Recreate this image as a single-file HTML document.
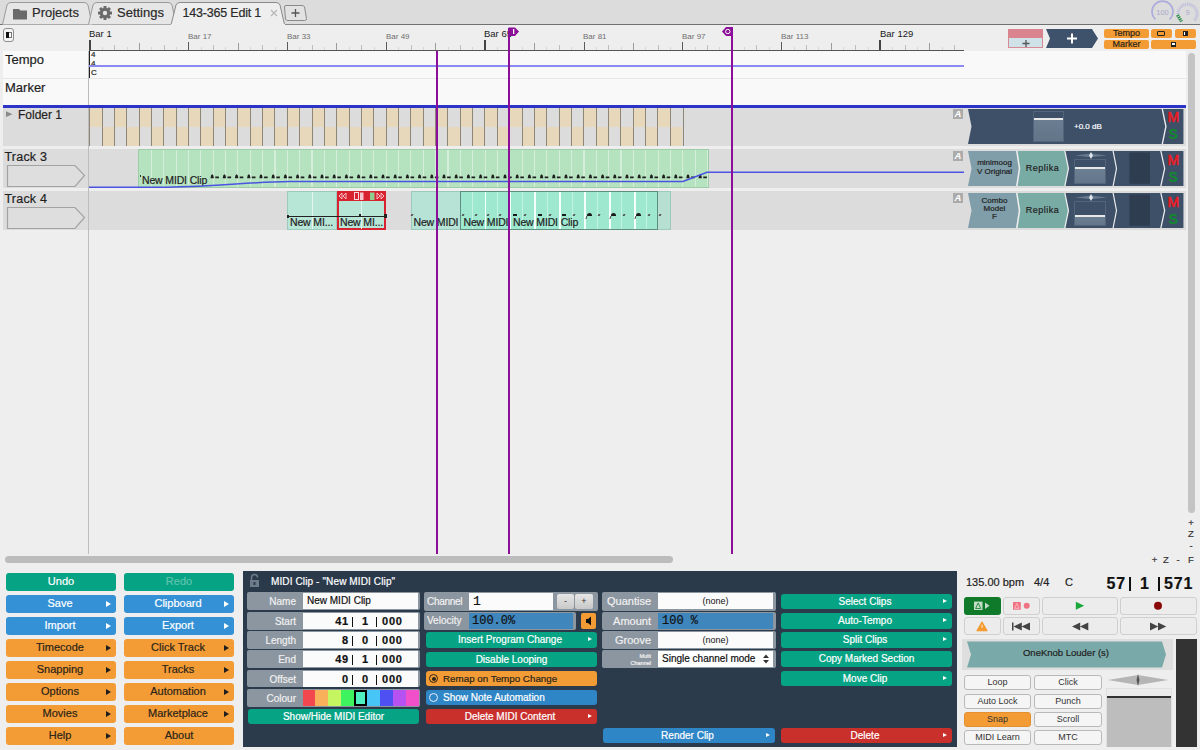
<!DOCTYPE html><html><head><meta charset="utf-8"><style>
*{box-sizing:border-box;margin:0;padding:0}
html,body{width:1200px;height:750px;overflow:hidden;background:#eeeeee;font-family:"Liberation Sans",sans-serif;position:relative}
div,span,i{position:absolute;display:block}
span,.btn,.val{-webkit-text-stroke:0.2px currentColor}
.thin{-webkit-text-stroke:0}
.btn{border-radius:3px;text-align:center;font-size:11px;line-height:18px;color:#fff;white-space:nowrap}
.g{background:#07a385}
.b{background:#3591d5}
.o{background:#f39c36;color:#2b2418}
.r{background:#c9302c}
.arr{right:5px;top:5.5px;width:0;height:0;border-left:5px solid #fff;border-top:3.2px solid transparent;border-bottom:3.2px solid transparent}
.o .arr{border-left-color:#1e1e1e}
.tk{width:1px;background:#c4c4c4}
.lbl{font-size:11px;color:#f0f0f0;text-align:right;white-space:nowrap}
.row{background:#8c96a0;border-radius:2px}
.val{background:#fbfbfb;color:#111;font-size:11px;white-space:nowrap}
.tb{border:1px solid #cfcfcf;border-radius:3px;background:#ececec}
.sb{border:1px solid #b9b9b9;border-radius:3px;background:#f5f5f5;font-size:10px;text-align:center;color:#333;line-height:13px}
</style></head><body>
<div style="left:0;top:0;width:1200px;height:25px;background:#dcdcdc"></div>
<div style="left:0;top:24px;width:1200px;height:1px;background:#707070"></div>
<svg style="position:absolute;left:0;top:0" width="320" height="26">
<path d="M2.5 24.5 L7 5 Q8 2.5 11 2.5 L84 2.5 Q87 2.5 88 5 L92 24.5" fill="#e6e6e6" stroke="#9a9a9a" stroke-width="1"/>
<path d="M88.5 24.5 L93 5 Q94 2.5 97 2.5 L168 2.5 Q171 2.5 172 5 L176 24.5" fill="#e6e6e6" stroke="#9a9a9a" stroke-width="1"/>
<path d="M171 25 L176 5 Q177 2.5 180 2.5 L276 2.5 Q279 2.5 280 5 L284.5 24.5 L1200 24.5" fill="#eeeeee" stroke="#8a8a8a" stroke-width="1"/>
<rect x="171" y="24" width="114" height="3" fill="#eeeeee"/>
<path d="M284.5 7 Q284.5 5.5 286 5.5 L302 5.5 Q304 5.5 304.5 7 L306.5 18.5 Q306.5 20.5 304.5 20.5 L288 20.5 Q286 20.5 285.5 19 Z" fill="#e2e2e2" stroke="#8a8a8a"/>
<path d="M295.5 9 V17 M291.5 13 H299.5" stroke="#555" stroke-width="1.3"/>
<path d="M13 9 H19 L20.5 10.5 H27 V19.5 H13 Z" fill="#6a6a6a"/>
<g transform="translate(105,13)" fill="#6a6a6a"><circle r="5.2"/><g id="teeth"><rect x="-1.5" y="-7" width="3" height="14"/><rect x="-7" y="-1.5" width="14" height="3"/><rect x="-1.5" y="-7" width="3" height="14" transform="rotate(45)"/><rect x="-1.5" y="-7" width="3" height="14" transform="rotate(-45)"/></g><circle r="2.2" fill="#e6e6e6"/></g>
<path d="M271 10 L277 16 M277 10 L271 16" stroke="#b5b5b5" stroke-width="1.2"/>
</svg>
<span style="left:32px;top:5px;font-size:13px;color:#2a2a2a;line-height:16px">Projects</span>
<span style="left:117px;top:5px;font-size:13px;color:#2a2a2a;line-height:16px">Settings</span>
<span style="left:182.5px;top:5px;font-size:12.5px;color:#2a2a2a;line-height:16px;letter-spacing:-0.2px">143-365 Edit 1</span>
<svg style="position:absolute;left:1145px;top:0" width="55" height="25">
<path d="M10.5 19.5 A10.5 10.5 0 1 1 24.5 19.5" fill="none" stroke="#acacdc" stroke-width="1.6"/>
<text x="17.5" y="15" font-size="7.5" fill="#a8a8cc" text-anchor="middle" font-family="Liberation Sans">100</text>
<path d="M35.8 20.5 A9.5 9.5 0 1 1 49.2 20.5" fill="none" stroke="#b8b8de" stroke-width="3" stroke-dasharray="0.9 0.9"/>
<path d="M32.5 15 L36.5 21.5" stroke="#1f8f3a" stroke-width="3.2" stroke-dasharray="1.3 0.9"/>
<text x="42.5" y="15" font-size="7.5" fill="#a8a8cc" text-anchor="middle" font-family="Liberation Sans">9</text>
</svg>
<div style="left:0;top:25px;width:1200px;height:26px;background:#eeeeee"></div>
<div style="left:3px;top:28px;width:11px;height:14px;border:1px solid #8e8e8e;border-radius:3px;background:#f3f3f3"></div>
<div style="left:6px;top:32px;width:6px;height:6px;border:1px solid #777;background:#fff"></div>
<div style="left:6px;top:32px;width:3px;height:6px;background:#111"></div>
<i class="tk" style="left:88.5px;top:40px;height:10px;width:2px;background:#444"></i><i class="tk" style="left:101.5px;top:47px;height:3px;width:1.2px;background:#d6d6d6"></i><i class="tk" style="left:114.0px;top:45px;height:5px;width:1.2px;background:#bdbdbd"></i><i class="tk" style="left:126.5px;top:47px;height:3px;width:1.2px;background:#d6d6d6"></i><i class="tk" style="left:138.5px;top:43px;height:7px;width:1.3px;background:#9c9c9c"></i><i class="tk" style="left:151.0px;top:47px;height:3px;width:1.2px;background:#d6d6d6"></i><i class="tk" style="left:163.5px;top:45px;height:5px;width:1.2px;background:#bdbdbd"></i><i class="tk" style="left:175.5px;top:47px;height:3px;width:1.2px;background:#d6d6d6"></i><i class="tk" style="left:188.0px;top:41.5px;height:8.5px;width:1.3px;background:#5a5a5a"></i><i class="tk" style="left:200.5px;top:47px;height:3px;width:1.2px;background:#d6d6d6"></i><i class="tk" style="left:212.5px;top:45px;height:5px;width:1.2px;background:#bdbdbd"></i><i class="tk" style="left:225.0px;top:47px;height:3px;width:1.2px;background:#d6d6d6"></i><i class="tk" style="left:237.5px;top:43px;height:7px;width:1.3px;background:#9c9c9c"></i><i class="tk" style="left:250.0px;top:47px;height:3px;width:1.2px;background:#d6d6d6"></i><i class="tk" style="left:262.0px;top:45px;height:5px;width:1.2px;background:#bdbdbd"></i><i class="tk" style="left:274.5px;top:47px;height:3px;width:1.2px;background:#d6d6d6"></i><i class="tk" style="left:287.0px;top:41.5px;height:8.5px;width:1.3px;background:#5a5a5a"></i><i class="tk" style="left:299.0px;top:47px;height:3px;width:1.2px;background:#d6d6d6"></i><i class="tk" style="left:311.5px;top:45px;height:5px;width:1.2px;background:#bdbdbd"></i><i class="tk" style="left:324.0px;top:47px;height:3px;width:1.2px;background:#d6d6d6"></i><i class="tk" style="left:336.0px;top:43px;height:7px;width:1.3px;background:#9c9c9c"></i><i class="tk" style="left:348.5px;top:47px;height:3px;width:1.2px;background:#d6d6d6"></i><i class="tk" style="left:361.0px;top:45px;height:5px;width:1.2px;background:#bdbdbd"></i><i class="tk" style="left:373.5px;top:47px;height:3px;width:1.2px;background:#d6d6d6"></i><i class="tk" style="left:385.5px;top:41.5px;height:8.5px;width:1.3px;background:#5a5a5a"></i><i class="tk" style="left:398.0px;top:47px;height:3px;width:1.2px;background:#d6d6d6"></i><i class="tk" style="left:410.5px;top:45px;height:5px;width:1.2px;background:#bdbdbd"></i><i class="tk" style="left:422.5px;top:47px;height:3px;width:1.2px;background:#d6d6d6"></i><i class="tk" style="left:435.0px;top:43px;height:7px;width:1.3px;background:#9c9c9c"></i><i class="tk" style="left:447.5px;top:47px;height:3px;width:1.2px;background:#d6d6d6"></i><i class="tk" style="left:460.0px;top:45px;height:5px;width:1.2px;background:#bdbdbd"></i><i class="tk" style="left:472.0px;top:47px;height:3px;width:1.2px;background:#d6d6d6"></i><i class="tk" style="left:484.0px;top:40px;height:10px;width:2px;background:#444"></i><i class="tk" style="left:497.0px;top:47px;height:3px;width:1.2px;background:#d6d6d6"></i><i class="tk" style="left:509.0px;top:45px;height:5px;width:1.2px;background:#bdbdbd"></i><i class="tk" style="left:521.5px;top:47px;height:3px;width:1.2px;background:#d6d6d6"></i><i class="tk" style="left:534.0px;top:43px;height:7px;width:1.3px;background:#9c9c9c"></i><i class="tk" style="left:546.0px;top:47px;height:3px;width:1.2px;background:#d6d6d6"></i><i class="tk" style="left:558.5px;top:45px;height:5px;width:1.2px;background:#bdbdbd"></i><i class="tk" style="left:571.0px;top:47px;height:3px;width:1.2px;background:#d6d6d6"></i><i class="tk" style="left:583.5px;top:41.5px;height:8.5px;width:1.3px;background:#5a5a5a"></i><i class="tk" style="left:595.5px;top:47px;height:3px;width:1.2px;background:#d6d6d6"></i><i class="tk" style="left:608.0px;top:45px;height:5px;width:1.2px;background:#bdbdbd"></i><i class="tk" style="left:620.5px;top:47px;height:3px;width:1.2px;background:#d6d6d6"></i><i class="tk" style="left:632.5px;top:43px;height:7px;width:1.3px;background:#9c9c9c"></i><i class="tk" style="left:645.0px;top:47px;height:3px;width:1.2px;background:#d6d6d6"></i><i class="tk" style="left:657.5px;top:45px;height:5px;width:1.2px;background:#bdbdbd"></i><i class="tk" style="left:669.5px;top:47px;height:3px;width:1.2px;background:#d6d6d6"></i><i class="tk" style="left:682.0px;top:41.5px;height:8.5px;width:1.3px;background:#5a5a5a"></i><i class="tk" style="left:694.5px;top:47px;height:3px;width:1.2px;background:#d6d6d6"></i><i class="tk" style="left:707.0px;top:45px;height:5px;width:1.2px;background:#bdbdbd"></i><i class="tk" style="left:719.0px;top:47px;height:3px;width:1.2px;background:#d6d6d6"></i><i class="tk" style="left:731.5px;top:43px;height:7px;width:1.3px;background:#9c9c9c"></i><i class="tk" style="left:744.0px;top:47px;height:3px;width:1.2px;background:#d6d6d6"></i><i class="tk" style="left:756.0px;top:45px;height:5px;width:1.2px;background:#bdbdbd"></i><i class="tk" style="left:768.5px;top:47px;height:3px;width:1.2px;background:#d6d6d6"></i><i class="tk" style="left:781.0px;top:41.5px;height:8.5px;width:1.3px;background:#5a5a5a"></i><i class="tk" style="left:793.5px;top:47px;height:3px;width:1.2px;background:#d6d6d6"></i><i class="tk" style="left:805.5px;top:45px;height:5px;width:1.2px;background:#bdbdbd"></i><i class="tk" style="left:818.0px;top:47px;height:3px;width:1.2px;background:#d6d6d6"></i><i class="tk" style="left:830.5px;top:43px;height:7px;width:1.3px;background:#9c9c9c"></i><i class="tk" style="left:842.5px;top:47px;height:3px;width:1.2px;background:#d6d6d6"></i><i class="tk" style="left:855.0px;top:45px;height:5px;width:1.2px;background:#bdbdbd"></i><i class="tk" style="left:867.5px;top:47px;height:3px;width:1.2px;background:#d6d6d6"></i><i class="tk" style="left:879.0px;top:40px;height:10px;width:2px;background:#444"></i><i class="tk" style="left:892.0px;top:47px;height:3px;width:1.2px;background:#d6d6d6"></i><i class="tk" style="left:904.5px;top:45px;height:5px;width:1.2px;background:#bdbdbd"></i><i class="tk" style="left:917.0px;top:47px;height:3px;width:1.2px;background:#d6d6d6"></i><i class="tk" style="left:929.0px;top:43px;height:7px;width:1.3px;background:#9c9c9c"></i><i class="tk" style="left:941.5px;top:47px;height:3px;width:1.2px;background:#d6d6d6"></i><i class="tk" style="left:954.0px;top:45px;height:5px;width:1.2px;background:#bdbdbd"></i>
<div style="left:89px;top:50px;width:875px;height:1px;background:#555"></div>
<span class="thin" style="left:188px;top:31.5px;font-size:8px;color:#6e6e6e;line-height:9px">Bar 17</span>
<span class="thin" style="left:287px;top:31.5px;font-size:8px;color:#6e6e6e;line-height:9px">Bar 33</span>
<span class="thin" style="left:386px;top:31.5px;font-size:8px;color:#6e6e6e;line-height:9px">Bar 49</span>
<span class="thin" style="left:583px;top:31.5px;font-size:8px;color:#6e6e6e;line-height:9px">Bar 81</span>
<span class="thin" style="left:682px;top:31.5px;font-size:8px;color:#6e6e6e;line-height:9px">Bar 97</span>
<span class="thin" style="left:781px;top:31.5px;font-size:8px;color:#6e6e6e;line-height:9px">Bar 113</span>
<span class="thin" style="left:89px;top:29px;font-size:9.5px;color:#1a1a1a;line-height:10px">Bar 1</span>
<span class="thin" style="left:484px;top:29px;font-size:9.5px;color:#1a1a1a;line-height:10px">Bar 65</span>
<span class="thin" style="left:880px;top:29px;font-size:9.5px;color:#1a1a1a;line-height:10px">Bar 129</span>
<div style="left:3px;top:51px;width:1183px;height:27px;background:#f9f9f9"></div>
<div style="left:3px;top:78px;width:1183px;height:1px;background:#e6e6e6"></div>
<div style="left:3px;top:79px;width:1183px;height:26px;background:#f9f9f9"></div>
<span style="left:5px;top:52px;font-size:13px;color:#1f1f1f;line-height:15px">Tempo</span>
<span style="left:5px;top:80px;font-size:13px;color:#1f1f1f;line-height:15px">Marker</span>
<div style="left:89px;top:51px;width:1px;height:27px;background:#222"></div>
<span style="left:91px;top:50px;font-size:8px;color:#222;line-height:9px">4<br>4<br>C</span>
<div style="left:89px;top:65px;width:875px;height:2px;background:#8a8af2"></div>
<div style="left:3px;top:107px;width:1183px;height:39px;background:#dcdcdc"></div>
<div style="left:3px;top:149px;width:1183px;height:39px;background:#dcdcdc"></div>
<div style="left:3px;top:191px;width:1183px;height:39px;background:#dcdcdc"></div>
<div style="left:88px;top:51px;width:1px;height:503px;background:#bdbdbd"></div>
<svg style="position:absolute;left:5px;top:110px" width="10" height="10"><path d="M1 1.3 L7.5 4.2 L1 7 Z" fill="#8a8a8a"/></svg>
<span style="left:18px;top:108px;font-size:12px;color:#1f1f1f;line-height:14px">Folder 1</span>
<span style="left:4.5px;top:150px;font-size:12.5px;color:#1f1f1f;line-height:14px;letter-spacing:0.2px">Track 3</span>
<span style="left:4.5px;top:191.7px;font-size:12.5px;color:#1f1f1f;line-height:14px;letter-spacing:0.2px">Track 4</span>
<svg style="position:absolute;left:6px;top:164px" width="80" height="25"><path d="M1.5 1.5 H69 L78.5 11.5 L69 22.5 H1.5 Z" fill="#dedede" stroke="#a3a3a3" stroke-width="1.2"/></svg>
<svg style="position:absolute;left:6px;top:206px" width="80" height="25"><path d="M1.5 1.5 H69 L78.5 11.5 L69 22.5 H1.5 Z" fill="#dedede" stroke="#a3a3a3" stroke-width="1.2"/></svg>
<i style="left:89.20px;top:107px;width:12.35px;height:20px;background:#e8d8bb"></i><i style="left:89.20px;top:127px;width:12.35px;height:19px;background:#dcdcdc"></i><i style="left:89.20px;top:107px;width:1px;height:39px;background:#8e8677"></i><i style="left:101.55px;top:107px;width:12.35px;height:20px;background:#dcdcdc"></i><i style="left:101.55px;top:127px;width:12.35px;height:19px;background:#e8d8bb"></i><i style="left:101.55px;top:107px;width:1px;height:39px;background:#8e8677"></i><i style="left:113.90px;top:107px;width:12.35px;height:20px;background:#e8d8bb"></i><i style="left:113.90px;top:127px;width:12.35px;height:19px;background:#dcdcdc"></i><i style="left:113.90px;top:107px;width:1px;height:39px;background:#8e8677"></i><i style="left:126.26px;top:107px;width:12.35px;height:20px;background:#dcdcdc"></i><i style="left:126.26px;top:127px;width:12.35px;height:19px;background:#e8d8bb"></i><i style="left:126.26px;top:107px;width:1px;height:39px;background:#8e8677"></i><i style="left:138.61px;top:107px;width:12.35px;height:20px;background:#e8d8bb"></i><i style="left:138.61px;top:127px;width:12.35px;height:19px;background:#dcdcdc"></i><i style="left:138.61px;top:107px;width:1px;height:39px;background:#8e8677"></i><i style="left:150.96px;top:107px;width:12.35px;height:20px;background:#dcdcdc"></i><i style="left:150.96px;top:127px;width:12.35px;height:19px;background:#e8d8bb"></i><i style="left:150.96px;top:107px;width:1px;height:39px;background:#8e8677"></i><i style="left:163.31px;top:107px;width:12.35px;height:20px;background:#e8d8bb"></i><i style="left:163.31px;top:127px;width:12.35px;height:19px;background:#dcdcdc"></i><i style="left:163.31px;top:107px;width:1px;height:39px;background:#8e8677"></i><i style="left:175.66px;top:107px;width:12.35px;height:20px;background:#dcdcdc"></i><i style="left:175.66px;top:127px;width:12.35px;height:19px;background:#e8d8bb"></i><i style="left:175.66px;top:107px;width:1px;height:39px;background:#8e8677"></i><i style="left:188.02px;top:107px;width:12.35px;height:20px;background:#e8d8bb"></i><i style="left:188.02px;top:127px;width:12.35px;height:19px;background:#dcdcdc"></i><i style="left:188.02px;top:107px;width:1px;height:39px;background:#8e8677"></i><i style="left:200.37px;top:107px;width:12.35px;height:20px;background:#dcdcdc"></i><i style="left:200.37px;top:127px;width:12.35px;height:19px;background:#e8d8bb"></i><i style="left:200.37px;top:107px;width:1px;height:39px;background:#8e8677"></i><i style="left:212.72px;top:107px;width:12.35px;height:20px;background:#e8d8bb"></i><i style="left:212.72px;top:127px;width:12.35px;height:19px;background:#dcdcdc"></i><i style="left:212.72px;top:107px;width:1px;height:39px;background:#8e8677"></i><i style="left:225.07px;top:107px;width:12.35px;height:20px;background:#dcdcdc"></i><i style="left:225.07px;top:127px;width:12.35px;height:19px;background:#e8d8bb"></i><i style="left:225.07px;top:107px;width:1px;height:39px;background:#8e8677"></i><i style="left:237.42px;top:107px;width:12.35px;height:20px;background:#e8d8bb"></i><i style="left:237.42px;top:127px;width:12.35px;height:19px;background:#dcdcdc"></i><i style="left:237.42px;top:107px;width:1px;height:39px;background:#8e8677"></i><i style="left:249.78px;top:107px;width:12.35px;height:20px;background:#dcdcdc"></i><i style="left:249.78px;top:127px;width:12.35px;height:19px;background:#e8d8bb"></i><i style="left:249.78px;top:107px;width:1px;height:39px;background:#8e8677"></i><i style="left:262.13px;top:107px;width:12.35px;height:20px;background:#e8d8bb"></i><i style="left:262.13px;top:127px;width:12.35px;height:19px;background:#dcdcdc"></i><i style="left:262.13px;top:107px;width:1px;height:39px;background:#8e8677"></i><i style="left:274.48px;top:107px;width:12.35px;height:20px;background:#dcdcdc"></i><i style="left:274.48px;top:127px;width:12.35px;height:19px;background:#e8d8bb"></i><i style="left:274.48px;top:107px;width:1px;height:39px;background:#8e8677"></i><i style="left:286.83px;top:107px;width:12.35px;height:20px;background:#e8d8bb"></i><i style="left:286.83px;top:127px;width:12.35px;height:19px;background:#dcdcdc"></i><i style="left:286.83px;top:107px;width:1px;height:39px;background:#8e8677"></i><i style="left:299.18px;top:107px;width:12.35px;height:20px;background:#dcdcdc"></i><i style="left:299.18px;top:127px;width:12.35px;height:19px;background:#e8d8bb"></i><i style="left:299.18px;top:107px;width:1px;height:39px;background:#8e8677"></i><i style="left:311.54px;top:107px;width:12.35px;height:20px;background:#e8d8bb"></i><i style="left:311.54px;top:127px;width:12.35px;height:19px;background:#dcdcdc"></i><i style="left:311.54px;top:107px;width:1px;height:39px;background:#8e8677"></i><i style="left:323.89px;top:107px;width:12.35px;height:20px;background:#dcdcdc"></i><i style="left:323.89px;top:127px;width:12.35px;height:19px;background:#e8d8bb"></i><i style="left:323.89px;top:107px;width:1px;height:39px;background:#8e8677"></i><i style="left:336.24px;top:107px;width:12.35px;height:20px;background:#e8d8bb"></i><i style="left:336.24px;top:127px;width:12.35px;height:19px;background:#dcdcdc"></i><i style="left:336.24px;top:107px;width:1px;height:39px;background:#8e8677"></i><i style="left:348.59px;top:107px;width:12.35px;height:20px;background:#dcdcdc"></i><i style="left:348.59px;top:127px;width:12.35px;height:19px;background:#e8d8bb"></i><i style="left:348.59px;top:107px;width:1px;height:39px;background:#8e8677"></i><i style="left:360.94px;top:107px;width:12.35px;height:20px;background:#e8d8bb"></i><i style="left:360.94px;top:127px;width:12.35px;height:19px;background:#dcdcdc"></i><i style="left:360.94px;top:107px;width:1px;height:39px;background:#8e8677"></i><i style="left:373.30px;top:107px;width:12.35px;height:20px;background:#dcdcdc"></i><i style="left:373.30px;top:127px;width:12.35px;height:19px;background:#e8d8bb"></i><i style="left:373.30px;top:107px;width:1px;height:39px;background:#8e8677"></i><i style="left:385.65px;top:107px;width:12.35px;height:20px;background:#e8d8bb"></i><i style="left:385.65px;top:127px;width:12.35px;height:19px;background:#dcdcdc"></i><i style="left:385.65px;top:107px;width:1px;height:39px;background:#8e8677"></i><i style="left:398.00px;top:107px;width:12.35px;height:20px;background:#dcdcdc"></i><i style="left:398.00px;top:127px;width:12.35px;height:19px;background:#e8d8bb"></i><i style="left:398.00px;top:107px;width:1px;height:39px;background:#8e8677"></i><i style="left:410.35px;top:107px;width:12.35px;height:20px;background:#e8d8bb"></i><i style="left:410.35px;top:127px;width:12.35px;height:19px;background:#dcdcdc"></i><i style="left:410.35px;top:107px;width:1px;height:39px;background:#8e8677"></i><i style="left:422.70px;top:107px;width:12.35px;height:20px;background:#dcdcdc"></i><i style="left:422.70px;top:127px;width:12.35px;height:19px;background:#e8d8bb"></i><i style="left:422.70px;top:107px;width:1px;height:39px;background:#8e8677"></i><i style="left:435.06px;top:107px;width:12.35px;height:20px;background:#e8d8bb"></i><i style="left:435.06px;top:127px;width:12.35px;height:19px;background:#dcdcdc"></i><i style="left:435.06px;top:107px;width:1px;height:39px;background:#8e8677"></i><i style="left:447.41px;top:107px;width:12.35px;height:20px;background:#dcdcdc"></i><i style="left:447.41px;top:127px;width:12.35px;height:19px;background:#e8d8bb"></i><i style="left:447.41px;top:107px;width:1px;height:39px;background:#8e8677"></i><i style="left:459.76px;top:107px;width:12.35px;height:20px;background:#e8d8bb"></i><i style="left:459.76px;top:127px;width:12.35px;height:19px;background:#dcdcdc"></i><i style="left:459.76px;top:107px;width:1px;height:39px;background:#8e8677"></i><i style="left:472.11px;top:107px;width:12.35px;height:20px;background:#dcdcdc"></i><i style="left:472.11px;top:127px;width:12.35px;height:19px;background:#e8d8bb"></i><i style="left:472.11px;top:107px;width:1px;height:39px;background:#8e8677"></i><i style="left:484.46px;top:107px;width:12.35px;height:20px;background:#e8d8bb"></i><i style="left:484.46px;top:127px;width:12.35px;height:19px;background:#dcdcdc"></i><i style="left:484.46px;top:107px;width:1px;height:39px;background:#8e8677"></i><i style="left:496.82px;top:107px;width:12.35px;height:20px;background:#dcdcdc"></i><i style="left:496.82px;top:127px;width:12.35px;height:19px;background:#e8d8bb"></i><i style="left:496.82px;top:107px;width:1px;height:39px;background:#8e8677"></i><i style="left:509.17px;top:107px;width:12.35px;height:20px;background:#e8d8bb"></i><i style="left:509.17px;top:127px;width:12.35px;height:19px;background:#dcdcdc"></i><i style="left:509.17px;top:107px;width:1px;height:39px;background:#8e8677"></i><i style="left:521.52px;top:107px;width:12.35px;height:20px;background:#dcdcdc"></i><i style="left:521.52px;top:127px;width:12.35px;height:19px;background:#e8d8bb"></i><i style="left:521.52px;top:107px;width:1px;height:39px;background:#8e8677"></i><i style="left:533.87px;top:107px;width:12.35px;height:20px;background:#e8d8bb"></i><i style="left:533.87px;top:127px;width:12.35px;height:19px;background:#dcdcdc"></i><i style="left:533.87px;top:107px;width:1px;height:39px;background:#8e8677"></i><i style="left:546.22px;top:107px;width:12.35px;height:20px;background:#dcdcdc"></i><i style="left:546.22px;top:127px;width:12.35px;height:19px;background:#e8d8bb"></i><i style="left:546.22px;top:107px;width:1px;height:39px;background:#8e8677"></i><i style="left:558.58px;top:107px;width:12.35px;height:20px;background:#e8d8bb"></i><i style="left:558.58px;top:127px;width:12.35px;height:19px;background:#dcdcdc"></i><i style="left:558.58px;top:107px;width:1px;height:39px;background:#8e8677"></i><i style="left:570.93px;top:107px;width:12.35px;height:20px;background:#dcdcdc"></i><i style="left:570.93px;top:127px;width:12.35px;height:19px;background:#e8d8bb"></i><i style="left:570.93px;top:107px;width:1px;height:39px;background:#8e8677"></i><i style="left:583.28px;top:107px;width:12.35px;height:20px;background:#e8d8bb"></i><i style="left:583.28px;top:127px;width:12.35px;height:19px;background:#dcdcdc"></i><i style="left:583.28px;top:107px;width:1px;height:39px;background:#8e8677"></i><i style="left:595.63px;top:107px;width:12.35px;height:20px;background:#dcdcdc"></i><i style="left:595.63px;top:127px;width:12.35px;height:19px;background:#e8d8bb"></i><i style="left:595.63px;top:107px;width:1px;height:39px;background:#8e8677"></i><i style="left:607.98px;top:107px;width:12.35px;height:20px;background:#e8d8bb"></i><i style="left:607.98px;top:127px;width:12.35px;height:19px;background:#dcdcdc"></i><i style="left:607.98px;top:107px;width:1px;height:39px;background:#8e8677"></i><i style="left:620.34px;top:107px;width:12.35px;height:20px;background:#dcdcdc"></i><i style="left:620.34px;top:127px;width:12.35px;height:19px;background:#e8d8bb"></i><i style="left:620.34px;top:107px;width:1px;height:39px;background:#8e8677"></i><i style="left:632.69px;top:107px;width:12.35px;height:20px;background:#e8d8bb"></i><i style="left:632.69px;top:127px;width:12.35px;height:19px;background:#dcdcdc"></i><i style="left:632.69px;top:107px;width:1px;height:39px;background:#8e8677"></i><i style="left:645.04px;top:107px;width:12.35px;height:20px;background:#dcdcdc"></i><i style="left:645.04px;top:127px;width:12.35px;height:19px;background:#e8d8bb"></i><i style="left:645.04px;top:107px;width:1px;height:39px;background:#8e8677"></i><i style="left:657.39px;top:107px;width:12.35px;height:20px;background:#e8d8bb"></i><i style="left:657.39px;top:127px;width:12.35px;height:19px;background:#dcdcdc"></i><i style="left:657.39px;top:107px;width:1px;height:39px;background:#8e8677"></i><i style="left:669.74px;top:107px;width:12.35px;height:20px;background:#dcdcdc"></i><i style="left:669.74px;top:127px;width:12.35px;height:19px;background:#e8d8bb"></i><i style="left:669.74px;top:107px;width:1px;height:39px;background:#8e8677"></i><i style="left:683px;top:107px;width:1px;height:39px;background:#8e8677"></i>
<div style="left:2.5px;top:105px;width:1183.5px;height:2.6px;background:#2b34c6"></div>
<div style="left:138px;top:149px;width:571px;height:39px;background:#b6e3bf;border:1px solid #9dcca7"></div><i style="left:150.8px;top:150px;width:1.2px;height:37px;background:#d5eed9"></i><i style="left:163.1px;top:150px;width:1.2px;height:37px;background:#d5eed9"></i><i style="left:175.5px;top:150px;width:1.2px;height:37px;background:#d5eed9"></i><i style="left:187.8px;top:150px;width:1.2px;height:37px;background:#d5eed9"></i><i style="left:200.2px;top:150px;width:1.2px;height:37px;background:#d5eed9"></i><i style="left:212.6px;top:150px;width:1.2px;height:37px;background:#d5eed9"></i><i style="left:224.9px;top:150px;width:1.2px;height:37px;background:#d5eed9"></i><i style="left:237.3px;top:150px;width:1.2px;height:37px;background:#d5eed9"></i><i style="left:249.6px;top:150px;width:1.2px;height:37px;background:#d5eed9"></i><i style="left:262.0px;top:150px;width:1.2px;height:37px;background:#d5eed9"></i><i style="left:274.4px;top:150px;width:1.2px;height:37px;background:#d5eed9"></i><i style="left:286.7px;top:150px;width:1.2px;height:37px;background:#d5eed9"></i><i style="left:299.1px;top:150px;width:1.2px;height:37px;background:#d5eed9"></i><i style="left:311.4px;top:150px;width:1.2px;height:37px;background:#d5eed9"></i><i style="left:323.8px;top:150px;width:1.2px;height:37px;background:#d5eed9"></i><i style="left:336.2px;top:150px;width:1.2px;height:37px;background:#d5eed9"></i><i style="left:348.5px;top:150px;width:1.2px;height:37px;background:#d5eed9"></i><i style="left:360.9px;top:150px;width:1.2px;height:37px;background:#d5eed9"></i><i style="left:373.2px;top:150px;width:1.2px;height:37px;background:#d5eed9"></i><i style="left:385.6px;top:150px;width:1.2px;height:37px;background:#d5eed9"></i><i style="left:398.0px;top:150px;width:1.2px;height:37px;background:#d5eed9"></i><i style="left:410.3px;top:150px;width:1.2px;height:37px;background:#d5eed9"></i><i style="left:422.7px;top:150px;width:1.2px;height:37px;background:#d5eed9"></i><i style="left:435.0px;top:150px;width:1.2px;height:37px;background:#d5eed9"></i><i style="left:447.4px;top:150px;width:1.2px;height:37px;background:#d5eed9"></i><i style="left:459.8px;top:150px;width:1.2px;height:37px;background:#d5eed9"></i><i style="left:472.1px;top:150px;width:1.2px;height:37px;background:#d5eed9"></i><i style="left:484.5px;top:150px;width:1.2px;height:37px;background:#d5eed9"></i><i style="left:496.8px;top:150px;width:1.2px;height:37px;background:#d5eed9"></i><i style="left:509.2px;top:150px;width:1.2px;height:37px;background:#d5eed9"></i><i style="left:521.6px;top:150px;width:1.2px;height:37px;background:#d5eed9"></i><i style="left:533.9px;top:150px;width:1.2px;height:37px;background:#d5eed9"></i><i style="left:546.3px;top:150px;width:1.2px;height:37px;background:#d5eed9"></i><i style="left:558.6px;top:150px;width:1.2px;height:37px;background:#d5eed9"></i><i style="left:571.0px;top:150px;width:1.2px;height:37px;background:#d5eed9"></i><i style="left:583.4px;top:150px;width:1.2px;height:37px;background:#d5eed9"></i><i style="left:595.7px;top:150px;width:1.2px;height:37px;background:#d5eed9"></i><i style="left:608.1px;top:150px;width:1.2px;height:37px;background:#d5eed9"></i><i style="left:620.4px;top:150px;width:1.2px;height:37px;background:#d5eed9"></i><i style="left:632.8px;top:150px;width:1.2px;height:37px;background:#d5eed9"></i><i style="left:645.2px;top:150px;width:1.2px;height:37px;background:#d5eed9"></i><i style="left:657.5px;top:150px;width:1.2px;height:37px;background:#d5eed9"></i><i style="left:669.9px;top:150px;width:1.2px;height:37px;background:#d5eed9"></i><i style="left:682.2px;top:150px;width:1.2px;height:37px;background:#d5eed9"></i><i style="left:694.6px;top:150px;width:1.2px;height:37px;background:#d5eed9"></i><i style="left:707.0px;top:150px;width:1.2px;height:37px;background:#d5eed9"></i>
<span style="left:142px;top:174px;font-size:10.5px;color:#222;line-height:12px;letter-spacing:-0.15px">New MIDI Clip</span>
<i style="left:139.5px;top:175px;width:1px;height:2px;background:#333"></i>
<svg style="position:absolute;left:200px;top:0" width="520" height="190"><path d="M10.5 178.3 L11.1 175.3 L12.2 174.2 L13.3 175.3 L13.9 178.3 Z M15.3 176.5 h3.6 v1.8 h-3.6 Z M22.7 178.3 L23.3 175.3 L24.4 174.2 L25.5 175.3 L26.1 178.3 Z M27.5 176.5 h3.6 v1.8 h-3.6 Z M34.9 178.3 L35.5 175.3 L36.6 174.2 L37.7 175.3 L38.3 178.3 Z M39.7 176.5 h3.6 v1.8 h-3.6 Z M47.1 178.3 L47.7 175.3 L48.8 174.2 L49.9 175.3 L50.5 178.3 Z M51.9 176.5 h3.6 v1.8 h-3.6 Z M59.3 178.3 L59.9 175.3 L61.0 174.2 L62.1 175.3 L62.7 178.3 Z M64.1 176.5 h3.6 v1.8 h-3.6 Z M71.5 178.3 L72.1 175.3 L73.2 174.2 L74.3 175.3 L74.9 178.3 Z M76.3 176.5 h3.6 v1.8 h-3.6 Z M83.7 178.3 L84.3 175.3 L85.4 174.2 L86.5 175.3 L87.1 178.3 Z M88.5 176.5 h3.6 v1.8 h-3.6 Z M95.9 178.3 L96.5 175.3 L97.6 174.2 L98.7 175.3 L99.3 178.3 Z M100.7 176.5 h3.6 v1.8 h-3.6 Z M108.1 178.3 L108.7 175.3 L109.8 174.2 L110.9 175.3 L111.5 178.3 Z M112.9 176.5 h3.6 v1.8 h-3.6 Z M120.3 178.3 L120.9 175.3 L122.0 174.2 L123.1 175.3 L123.7 178.3 Z M125.1 176.5 h3.6 v1.8 h-3.6 Z M132.5 178.3 L133.1 175.3 L134.2 174.2 L135.3 175.3 L135.9 178.3 Z M137.3 176.5 h3.6 v1.8 h-3.6 Z M144.7 178.3 L145.3 175.3 L146.4 174.2 L147.5 175.3 L148.1 178.3 Z M149.5 176.5 h3.6 v1.8 h-3.6 Z M156.9 178.3 L157.5 175.3 L158.6 174.2 L159.7 175.3 L160.3 178.3 Z M161.7 176.5 h3.6 v1.8 h-3.6 Z M169.1 178.3 L169.7 175.3 L170.8 174.2 L171.9 175.3 L172.5 178.3 Z M173.9 176.5 h3.6 v1.8 h-3.6 Z M181.3 178.3 L181.9 175.3 L183.0 174.2 L184.1 175.3 L184.7 178.3 Z M186.1 176.5 h3.6 v1.8 h-3.6 Z M193.5 178.3 L194.1 175.3 L195.2 174.2 L196.3 175.3 L196.9 178.3 Z M198.3 176.5 h3.6 v1.8 h-3.6 Z M205.7 178.3 L206.3 175.3 L207.4 174.2 L208.5 175.3 L209.1 178.3 Z M210.5 176.5 h3.6 v1.8 h-3.6 Z M217.9 178.3 L218.5 175.3 L219.6 174.2 L220.7 175.3 L221.3 178.3 Z M222.7 176.5 h3.6 v1.8 h-3.6 Z M230.1 178.3 L230.7 175.3 L231.8 174.2 L232.9 175.3 L233.5 178.3 Z M234.9 176.5 h3.6 v1.8 h-3.6 Z M242.3 178.3 L242.9 175.3 L244.0 174.2 L245.1 175.3 L245.7 178.3 Z M247.1 176.5 h3.6 v1.8 h-3.6 Z M254.5 178.3 L255.1 175.3 L256.2 174.2 L257.3 175.3 L257.9 178.3 Z M259.3 176.5 h3.6 v1.8 h-3.6 Z M266.7 178.3 L267.3 175.3 L268.4 174.2 L269.5 175.3 L270.1 178.3 Z M271.5 176.5 h3.6 v1.8 h-3.6 Z M278.9 178.3 L279.5 175.3 L280.6 174.2 L281.7 175.3 L282.3 178.3 Z M283.7 176.5 h3.6 v1.8 h-3.6 Z M291.1 178.3 L291.7 175.3 L292.8 174.2 L293.9 175.3 L294.5 178.3 Z M295.9 176.5 h3.6 v1.8 h-3.6 Z M303.3 178.3 L303.9 175.3 L305.0 174.2 L306.1 175.3 L306.7 178.3 Z M308.1 176.5 h3.6 v1.8 h-3.6 Z M315.5 178.3 L316.1 175.3 L317.2 174.2 L318.3 175.3 L318.9 178.3 Z M320.3 176.5 h3.6 v1.8 h-3.6 Z M327.7 178.3 L328.3 175.3 L329.4 174.2 L330.5 175.3 L331.1 178.3 Z M332.5 176.5 h3.6 v1.8 h-3.6 Z M339.9 178.3 L340.5 175.3 L341.6 174.2 L342.7 175.3 L343.3 178.3 Z M344.7 176.5 h3.6 v1.8 h-3.6 Z M352.1 178.3 L352.7 175.3 L353.8 174.2 L354.9 175.3 L355.5 178.3 Z M356.9 176.5 h3.6 v1.8 h-3.6 Z M364.3 178.3 L364.9 175.3 L366.0 174.2 L367.1 175.3 L367.7 178.3 Z M369.1 176.5 h3.6 v1.8 h-3.6 Z M376.5 178.3 L377.1 175.3 L378.2 174.2 L379.3 175.3 L379.9 178.3 Z M381.3 176.5 h3.6 v1.8 h-3.6 Z M388.7 178.3 L389.3 175.3 L390.4 174.2 L391.5 175.3 L392.1 178.3 Z M393.5 176.5 h3.6 v1.8 h-3.6 Z M400.9 178.3 L401.5 175.3 L402.6 174.2 L403.7 175.3 L404.3 178.3 Z M405.7 176.5 h3.6 v1.8 h-3.6 Z M413.1 178.3 L413.7 175.3 L414.8 174.2 L415.9 175.3 L416.5 178.3 Z M417.9 176.5 h3.6 v1.8 h-3.6 Z M425.3 178.3 L425.9 175.3 L427.0 174.2 L428.1 175.3 L428.7 178.3 Z M430.1 176.5 h3.6 v1.8 h-3.6 Z M437.5 178.3 L438.1 175.3 L439.2 174.2 L440.3 175.3 L440.9 178.3 Z M442.3 176.5 h3.6 v1.8 h-3.6 Z M449.7 178.3 L450.3 175.3 L451.4 174.2 L452.5 175.3 L453.1 178.3 Z M454.5 176.5 h3.6 v1.8 h-3.6 Z M461.9 178.3 L462.5 175.3 L463.6 174.2 L464.7 175.3 L465.3 178.3 Z M466.7 176.5 h3.6 v1.8 h-3.6 Z M474.1 178.3 L474.7 175.3 L475.8 174.2 L476.9 175.3 L477.5 178.3 Z M478.9 176.5 h3.6 v1.8 h-3.6 Z M486.3 178.3 L486.9 175.3 L488.0 174.2 L489.1 175.3 L489.7 178.3 Z M491.1 176.5 h3.6 v1.8 h-3.6 Z M498.5 178.3 L499.1 175.3 L500.2 174.2 L501.3 175.3 L501.9 178.3 Z M503.3 176.5 h3.6 v1.8 h-3.6 Z" fill="#1e1e1e"/></svg>
<svg style="position:absolute;left:89px;top:140px" width="880" height="50"><path d="M0 47.2 L78 47.2 C130 46.5 160 42 200 41.5 L594 41.5 L618 32.3 L875 32.3" fill="none" stroke="#4a54e0" stroke-width="1.5"/></svg>
<div style="left:287px;top:191px;width:50px;height:39px;background:#b7e5d6;border:1px solid #9ccabc"></div><div style="left:410.5px;top:191px;width:50px;height:39px;background:#b6e3d5;border:1px solid #9ccabc"></div><div style="left:657px;top:191px;width:14px;height:39px;background:#b7e0d2;border:1px solid #9ccabc"></div><div style="left:460px;top:191px;width:198px;height:39px;background:#9ee8d0;border:1px solid #5f8f80"></div><div style="left:336.7px;top:191px;width:49.5px;height:38.6px;background:#b7e5d6;border:2px solid #d8222f"></div><div style="left:336.7px;top:191px;width:49.5px;height:9.7px;background:#d8222f"></div><i style="left:312px;top:192px;width:1.2px;height:37px;background:#e3f5ef"></i><i style="left:361px;top:201px;width:1.2px;height:28px;background:#e3f5ef"></i><i style="left:472.3px;top:192px;width:1.2px;height:37px;background:#c3f1e2"></i><i style="left:484.7px;top:192px;width:1.8px;height:37px;background:#f4fffb"></i><i style="left:497.1px;top:192px;width:1.2px;height:37px;background:#c3f1e2"></i><i style="left:509.6px;top:192px;width:1.8px;height:37px;background:#f4fffb"></i><i style="left:522.0px;top:192px;width:1.2px;height:37px;background:#c3f1e2"></i><i style="left:534.4px;top:192px;width:1.8px;height:37px;background:#f4fffb"></i><i style="left:546.8px;top:192px;width:1.2px;height:37px;background:#c3f1e2"></i><i style="left:559.2px;top:192px;width:1.8px;height:37px;background:#f4fffb"></i><i style="left:571.7px;top:192px;width:1.2px;height:37px;background:#c3f1e2"></i><i style="left:584.1px;top:192px;width:1.8px;height:37px;background:#f4fffb"></i><i style="left:596.5px;top:192px;width:1.2px;height:37px;background:#c3f1e2"></i><i style="left:608.9px;top:192px;width:1.8px;height:37px;background:#f4fffb"></i><i style="left:621.3px;top:192px;width:1.2px;height:37px;background:#c3f1e2"></i><i style="left:633.8px;top:192px;width:1.8px;height:37px;background:#f4fffb"></i><i style="left:646.2px;top:192px;width:1.2px;height:37px;background:#c3f1e2"></i>
<div style="left:287px;top:215.5px;width:100px;height:1.2px;background:#222"></div>
<i style="left:287px;top:214.5px;width:2px;height:3px;background:#222"></i><i style="left:358.5px;top:213.5px;width:2.5px;height:3px;background:#222"></i><i style="left:384px;top:214px;width:2.5px;height:3.5px;background:#222"></i>
<span style="left:290px;top:216px;font-size:10.5px;color:#222;line-height:12px;letter-spacing:-0.15px">New MI...</span>
<span style="left:340px;top:216px;font-size:10.5px;color:#222;line-height:12px;letter-spacing:-0.15px">New MI...</span>
<span style="left:413.5px;top:216px;font-size:10.5px;color:#222;line-height:12px;letter-spacing:-0.15px">New MIDI</span>
<span style="left:463.5px;top:216px;font-size:10.5px;color:#222;line-height:12px;letter-spacing:-0.15px">New MIDI</span>
<span style="left:513px;top:216px;font-size:10.5px;color:#222;line-height:12px;letter-spacing:-0.15px">New MIDI Clip</span>
<i style="left:411.3px;top:214.4px;width:1.5px;height:2.2px;background:#555;transform:skewX(-25deg)"></i><i style="left:462.3px;top:214.4px;width:1.5px;height:2.2px;background:#555;transform:skewX(-25deg)"></i><i style="left:474.8px;top:214.4px;width:1.5px;height:2.2px;background:#555;transform:skewX(-25deg)"></i><i style="left:487.3px;top:214.4px;width:1.5px;height:2.2px;background:#555;transform:skewX(-25deg)"></i><i style="left:499.3px;top:214.4px;width:1.5px;height:2.2px;background:#555;transform:skewX(-25deg)"></i><i style="left:512.5px;top:214px;width:4px;height:1.8px;background:#1a1a1a"></i><i style="left:524.3px;top:214.4px;width:1.5px;height:2.2px;background:#555;transform:skewX(-25deg)"></i><i style="left:537.5px;top:214px;width:4px;height:1.8px;background:#1a1a1a"></i><i style="left:549.3px;top:214.4px;width:1.5px;height:2.2px;background:#555;transform:skewX(-25deg)"></i><i style="left:561.5px;top:214px;width:4px;height:1.8px;background:#1a1a1a"></i><i style="left:573.3px;top:214.4px;width:1.5px;height:2.2px;background:#555;transform:skewX(-25deg)"></i><i style="left:586.7px;top:213.3px;width:5px;height:2.6px;background:#1a1a1a;border-radius:2.5px 2.5px 0 0"></i><i style="left:585.9px;top:215.5px;width:1.2px;height:2.5px;background:#444;transform:skewX(-20deg)"></i><i style="left:597.8px;top:214.4px;width:1.5px;height:2.2px;background:#555;transform:skewX(-25deg)"></i><i style="left:611.2px;top:213.3px;width:5px;height:2.6px;background:#1a1a1a;border-radius:2.5px 2.5px 0 0"></i><i style="left:610.4px;top:215.5px;width:1.2px;height:2.5px;background:#444;transform:skewX(-20deg)"></i><i style="left:622.8px;top:214.4px;width:1.5px;height:2.2px;background:#555;transform:skewX(-25deg)"></i><i style="left:635.7px;top:213.3px;width:5px;height:2.6px;background:#1a1a1a;border-radius:2.5px 2.5px 0 0"></i><i style="left:634.9px;top:215.5px;width:1.2px;height:2.5px;background:#444;transform:skewX(-20deg)"></i><i style="left:647.8px;top:214.4px;width:1.5px;height:2.2px;background:#555;transform:skewX(-25deg)"></i><i style="left:658.8px;top:214.4px;width:1.5px;height:2.2px;background:#555;transform:skewX(-25deg)"></i>
<svg style="position:absolute;left:336.7px;top:191px" width="52" height="11"><path d="M2 5 L5 2 V8 Z M6 5 L9 2 V8 Z" fill="none" stroke="#f8d0d4" stroke-width="0.9"/><rect x="17.5" y="1.5" width="4" height="7" fill="none" stroke="#f8d8dc" stroke-width="1"/><rect x="23" y="1.5" width="3.5" height="7.5" fill="#f4c8cc"/><rect x="33" y="1.5" width="4.5" height="7.5" fill="#8fce8f"/><path d="M40 2 V8 L43 5 Z M44 2 V8 L47 5 Z" fill="none" stroke="#f8d0d4" stroke-width="0.9"/></svg>
<div style="left:435.5px;top:51px;width:2px;height:503px;background:#8b0f99"></div>
<div style="left:508px;top:28px;width:2px;height:526px;background:#8b0f99"></div>
<div style="left:730.5px;top:27px;width:2px;height:527px;background:#8b0f99"></div>
<svg style="position:absolute;left:505px;top:25px" width="20" height="14"><path d="M3.5 2.5 H10 L14 6.5 L10 11 H3.5 Z" fill="#8b0f99"/><rect x="8" y="4" width="1.3" height="5" fill="#fff"/></svg>
<svg style="position:absolute;left:720px;top:25px" width="16" height="14"><path d="M12.5 2 H6 L2 6.5 L6 11 H12.5 Z" fill="#8b0f99"/><circle cx="7.8" cy="6.5" r="2.2" fill="none" stroke="#fff" stroke-width="1"/></svg>
<div style="left:1008px;top:29px;width:35px;height:19px;background:#cfe2e8;border:1px solid #d98b95"></div>
<div style="left:1008px;top:29px;width:35px;height:9px;background:#d9848f"></div>
<svg style="position:absolute;left:1008px;top:29px" width="36" height="20"><path d="M18 11 V18 M14.5 14.5 H21.5" stroke="#555" stroke-width="1.3"/></svg>
<svg style="position:absolute;left:1046px;top:29px" width="54" height="20"><path d="M0 0 H46 L52 9.5 L46 19 H0 L4 9.5 Z" fill="#3e526c"/><path d="M26 4.5 V14.5 M21 9.5 H31" stroke="#fff" stroke-width="2"/></svg>
<div class="btn o" style="left:1104px;top:29px;width:45px;height:9px;line-height:9px;font-size:9px;border-radius:2px">Tempo</div>
<div class="btn o" style="left:1104px;top:40px;width:45px;height:9px;line-height:9px;font-size:9px;border-radius:2px">Marker</div>
<div class="btn o" style="left:1151px;top:29px;width:21px;height:9px;border-radius:2px"><i style="left:6px;top:2px;width:8px;height:5px;border:1px solid #222;border-radius:1px"></i></div>
<div class="btn o" style="left:1175px;top:29px;width:21px;height:9px;border-radius:2px"><i style="left:8px;top:2px;width:5px;height:5px;border:1px solid #222;background:linear-gradient(90deg,#fff 50%,#222 50%)"></i></div>
<div class="btn o" style="left:1151px;top:40px;width:45px;height:9px;border-radius:2px"><i style="left:20px;top:2px;width:5px;height:5px;border:1px solid #222;background:linear-gradient(180deg,#fff 50%,#222 50%)"></i></div>
<div style="left:1188px;top:53px;width:7px;height:460px;border-radius:4px;background:#c4c4c4"></div>
<div style="left:953px;top:109.4px;width:10px;height:9.6px;background:#ababab;color:#fff;font-size:9.5px;line-height:10px;text-align:center;font-style:italic;font-weight:bold">A</div>
<div style="left:953px;top:151.4px;width:10px;height:9.6px;background:#ababab;color:#fff;font-size:9.5px;line-height:10px;text-align:center;font-style:italic;font-weight:bold">A</div>
<div style="left:953px;top:193.4px;width:10px;height:9.6px;background:#ababab;color:#fff;font-size:9.5px;line-height:10px;text-align:center;font-style:italic;font-weight:bold">A</div>
<i style="left:1100px;top:109px;width:84px;height:35px;background:#ededed"></i>
<svg style="position:absolute;left:968px;top:109px" width="220" height="36"><path d="M0 0 H193.6 L197.2 17.5 L193.6 35 H0 L3.5 17.5 Z" fill="#3d5068"/><path d="M195 0 H215.5 V35 H195 L198.6 17.5 Z" fill="#3d5068"/></svg>
<div style="left:1032.5px;top:111.4px;width:31px;height:31px;background:linear-gradient(#6f8194,#627488);border:1px solid #52657a"></div>
<div style="left:1032.5px;top:111.4px;width:31px;height:7px;background:#3d5068;border:1px solid #52657a;border-bottom:0"></div>
<div style="left:1033.5px;top:118px;width:29px;height:2px;background:#e8e8e8"></div>
<span style="left:1074px;top:122px;font-size:8px;color:#fff;line-height:10px">+0.0 dB</span>
<span style="left:1167.6px;top:110px;font-size:14px;color:#ee1a22;line-height:14px;-webkit-text-stroke:0.6px #ee1a22">M</span><span style="left:1168.4px;top:127px;font-size:14px;color:#13892f;line-height:14px;font-weight:bold">S</span>
<i style="left:1010px;top:151px;width:174px;height:35px;background:#ededed"></i>
<svg style="position:absolute;left:968px;top:151px" width="220" height="36"><path d="M0 0 H48 L50.7 17.5 L48 35 H0 L3.5 17.5 Z" fill="#7f9ea9"/><path d="M49.6 0 H96.2 L99.8 17.5 L96.2 35 H49.6 L52.3 17.5 Z" fill="#79aba5"/><path d="M97.5 0 H144.5 L147.9 17.5 L144.5 35 H97.5 L101.1 17.5 Z" fill="#3d5068"/><path d="M145.7 0 H192.2 L196 17.5 L192.2 35 H145.7 L149.1 17.5 Z" fill="#3d5068"/><path d="M193.5 0 H215.5 V35 H193.5 L197.3 17.5 Z" fill="#3d5068"/><rect x="161.3" y="1.5" width="20.7" height="31.3" fill="#2e3d50"/><path d="M107 4.4 L123 2.6 L139 4.4 L123 6.2 Z" fill="#66798d"/><path d="M123 1 L125 4.4 L123 8 L121 4.4 Z" fill="#dfe5ec"/></svg>
<span style="left:1167.6px;top:153px;font-size:14px;color:#ee1a22;line-height:14px;-webkit-text-stroke:0.6px #ee1a22">M</span><span style="left:1168.4px;top:170px;font-size:14px;color:#13892f;line-height:14px;font-weight:bold">S</span>
<i style="left:1010px;top:193px;width:174px;height:35px;background:#ededed"></i>
<svg style="position:absolute;left:968px;top:193px" width="220" height="36"><path d="M0 0 H48 L50.7 17.5 L48 35 H0 L3.5 17.5 Z" fill="#7f9ea9"/><path d="M49.6 0 H96.2 L99.8 17.5 L96.2 35 H49.6 L52.3 17.5 Z" fill="#79aba5"/><path d="M97.5 0 H144.5 L147.9 17.5 L144.5 35 H97.5 L101.1 17.5 Z" fill="#3d5068"/><path d="M145.7 0 H192.2 L196 17.5 L192.2 35 H145.7 L149.1 17.5 Z" fill="#3d5068"/><path d="M193.5 0 H215.5 V35 H193.5 L197.3 17.5 Z" fill="#3d5068"/><rect x="161.3" y="1.5" width="20.7" height="31.3" fill="#2e3d50"/><path d="M107 4.4 L123 2.6 L139 4.4 L123 6.2 Z" fill="#66798d"/><path d="M123 1 L125 4.4 L123 8 L121 4.4 Z" fill="#dfe5ec"/></svg>
<span style="left:1167.6px;top:195px;font-size:14px;color:#ee1a22;line-height:14px;-webkit-text-stroke:0.6px #ee1a22">M</span><span style="left:1168.4px;top:212px;font-size:14px;color:#13892f;line-height:14px;font-weight:bold">S</span>
<span style="left:972px;top:159px;width:45px;text-align:center;font-size:8px;color:#222;line-height:8.5px">minimoog<br>V Original</span>
<span style="left:972px;top:197px;width:45px;text-align:center;font-size:8px;color:#222;line-height:8.2px">Combo<br>Model<br>F</span>
<span style="left:1020px;top:162px;width:45px;text-align:center;font-size:9px;color:#222;line-height:12px;letter-spacing:0.5px">Replika</span>
<span style="left:1020px;top:204px;width:45px;text-align:center;font-size:9px;color:#222;line-height:12px;letter-spacing:0.5px">Replika</span>
<div style="left:1074px;top:159.4px;width:32px;height:24.4px;background:#3d5068;border:1px solid #52657a"></div>
<div style="left:1075px;top:167px;width:30px;height:15.8px;background:linear-gradient(#6f8194,#637589)"></div>
<div style="left:1075px;top:167px;width:30px;height:1.6px;background:#e8e8e8"></div>
<div style="left:1074px;top:201.4px;width:32px;height:24.4px;background:#3d5068;border:1px solid #52657a"></div>
<div style="left:1075px;top:215px;width:30px;height:9.8px;background:linear-gradient(#6f8194,#637589)"></div>
<div style="left:1075px;top:215px;width:30px;height:1.6px;background:#e8e8e8"></div>
<div style="left:5px;top:556px;width:668px;height:7px;border-radius:4px;background:#bcbcbc"></div>
<span style="left:1186px;top:516.5px;width:10px;text-align:center;font-size:9.5px;color:#333;line-height:12px">+</span>
<span style="left:1186px;top:527.7px;width:10px;text-align:center;font-size:9.5px;color:#333;line-height:12px">Z</span>
<span style="left:1186px;top:539.5px;width:10px;text-align:center;font-size:9.5px;color:#333;line-height:12px">-</span>
<span style="left:1149.5px;top:553.5px;width:10px;text-align:center;font-size:9.5px;color:#333;line-height:12px">+</span>
<span style="left:1161px;top:553.5px;width:10px;text-align:center;font-size:9.5px;color:#333;line-height:12px">Z</span>
<span style="left:1173px;top:553.5px;width:10px;text-align:center;font-size:9.5px;color:#333;line-height:12px">-</span>
<span style="left:1186px;top:553.5px;width:10px;text-align:center;font-size:9.5px;color:#333;line-height:12px">F</span>
<div class="btn g" style="left:6px;top:573px;width:110px;height:18px;line-height:16.5px;padding-right:0px">Undo</div>
<div class="btn g" style="left:124px;top:573px;width:110px;height:18px;line-height:16.5px;padding-right:0px;color:#5fc4ad">Redo</div>
<div class="btn b" style="left:6px;top:595px;width:110px;height:18px;line-height:16.5px;padding-right:2px">Save<i class=arr></i></div>
<div class="btn b" style="left:124px;top:595px;width:110px;height:18px;line-height:16.5px;padding-right:2px">Clipboard<i class=arr></i></div>
<div class="btn b" style="left:6px;top:617px;width:110px;height:18px;line-height:16.5px;padding-right:2px">Import<i class=arr></i></div>
<div class="btn b" style="left:124px;top:617px;width:110px;height:18px;line-height:16.5px;padding-right:2px">Export<i class=arr></i></div>
<div class="btn o" style="left:6px;top:639px;width:110px;height:18px;line-height:16.5px;padding-right:2px">Timecode<i class=arr></i></div>
<div class="btn o" style="left:124px;top:639px;width:110px;height:18px;line-height:16.5px;padding-right:2px">Click Track<i class=arr></i></div>
<div class="btn o" style="left:6px;top:661px;width:110px;height:18px;line-height:16.5px;padding-right:2px">Snapping<i class=arr></i></div>
<div class="btn o" style="left:124px;top:661px;width:110px;height:18px;line-height:16.5px;padding-right:2px">Tracks<i class=arr></i></div>
<div class="btn o" style="left:6px;top:683px;width:110px;height:18px;line-height:16.5px;padding-right:2px">Options<i class=arr></i></div>
<div class="btn o" style="left:124px;top:683px;width:110px;height:18px;line-height:16.5px;padding-right:2px">Automation<i class=arr></i></div>
<div class="btn o" style="left:6px;top:705px;width:110px;height:18px;line-height:16.5px;padding-right:2px">Movies<i class=arr></i></div>
<div class="btn o" style="left:124px;top:705px;width:110px;height:18px;line-height:16.5px;padding-right:2px">Marketplace<i class=arr></i></div>
<div class="btn o" style="left:6px;top:727px;width:110px;height:18px;line-height:16.5px;padding-right:2px">Help<i class=arr></i></div>
<div class="btn o" style="left:124px;top:727px;width:110px;height:18px;line-height:16.5px;padding-right:0px">About</div>
<div style="left:243px;top:571px;width:714px;height:176px;background:#2c3b4c"></div>
<div style="left:243px;top:571px;width:714px;height:21px;background:#2b3a4b"></div>
<svg style="position:absolute;left:247.5px;top:573px" width="14" height="16"><path d="M3.5 7 V4.5 A3 3 0 0 1 9.5 4.5" fill="none" stroke="#6e7c8a" stroke-width="1.5"/><rect x="2" y="7" width="9" height="7" fill="#6e7c8a"/><rect x="5.5" y="9" width="2" height="3" fill="#2c3b4c"/></svg>
<span style="left:271px;top:575.5px;font-size:10px;color:#fff;line-height:12px;letter-spacing:0.12px;-webkit-text-stroke:0.2px #fff">MIDI Clip - "New MIDI Clip"</span>
<div class="row" style="left:247px;top:592px;width:173px;height:18px"></div>
<span class="lbl" style="left:246px;top:593px;width:50px;line-height:18px;font-size:10px">Name</span>
<div class="row" style="left:247px;top:612px;width:173px;height:18px"></div>
<span class="lbl" style="left:246px;top:613px;width:50px;line-height:18px;font-size:10px">Start</span>
<div class="row" style="left:247px;top:631px;width:173px;height:18px"></div>
<span class="lbl" style="left:246px;top:632px;width:50px;line-height:18px;font-size:10px">Length</span>
<div class="row" style="left:247px;top:650px;width:173px;height:18px"></div>
<span class="lbl" style="left:246px;top:651px;width:50px;line-height:18px;font-size:10px">End</span>
<div class="row" style="left:247px;top:670px;width:173px;height:17px"></div>
<span class="lbl" style="left:246px;top:671px;width:50px;line-height:17px;font-size:10px">Offset</span>
<div class="row" style="left:247px;top:689px;width:173px;height:18px"></div>
<span class="lbl" style="left:246px;top:690px;width:50px;line-height:18px;font-size:10px">Colour</span>
<div class="val" style="left:303px;top:593px;width:115px;height:16px;line-height:16px;padding-left:4px;font-size:10px">New MIDI Clip</div>
<div class="val" style="left:303px;top:613px;width:115px;height:16px"></div>
<span style="left:300px;top:613px;width:49px;text-align:right;font-weight:bold;font-size:11px;letter-spacing:0.8px;line-height:16px;color:#111">41</span>
<i style="left:352px;top:617px;width:1.4px;height:9.5px;background:#111"></i>
<span style="left:358px;top:613px;width:14px;text-align:center;font-weight:bold;font-size:11px;line-height:16px;color:#111">1</span>
<i style="left:375.5px;top:617px;width:1.4px;height:9.5px;background:#111"></i>
<span style="left:382px;top:613px;font-weight:bold;font-size:11px;letter-spacing:0.8px;line-height:16px;color:#111">000</span>
<div class="val" style="left:303px;top:632px;width:115px;height:16px"></div>
<span style="left:300px;top:632px;width:49px;text-align:right;font-weight:bold;font-size:11px;letter-spacing:0.8px;line-height:16px;color:#111">8</span>
<i style="left:352px;top:636px;width:1.4px;height:9.5px;background:#111"></i>
<span style="left:358px;top:632px;width:14px;text-align:center;font-weight:bold;font-size:11px;line-height:16px;color:#111">0</span>
<i style="left:375.5px;top:636px;width:1.4px;height:9.5px;background:#111"></i>
<span style="left:382px;top:632px;font-weight:bold;font-size:11px;letter-spacing:0.8px;line-height:16px;color:#111">000</span>
<div class="val" style="left:303px;top:651px;width:115px;height:16px"></div>
<span style="left:300px;top:651px;width:49px;text-align:right;font-weight:bold;font-size:11px;letter-spacing:0.8px;line-height:16px;color:#111">49</span>
<i style="left:352px;top:655px;width:1.4px;height:9.5px;background:#111"></i>
<span style="left:358px;top:651px;width:14px;text-align:center;font-weight:bold;font-size:11px;line-height:16px;color:#111">1</span>
<i style="left:375.5px;top:655px;width:1.4px;height:9.5px;background:#111"></i>
<span style="left:382px;top:651px;font-weight:bold;font-size:11px;letter-spacing:0.8px;line-height:16px;color:#111">000</span>
<div class="val" style="left:303px;top:671px;width:115px;height:16px"></div>
<span style="left:300px;top:671px;width:49px;text-align:right;font-weight:bold;font-size:11px;letter-spacing:0.8px;line-height:16px;color:#111">0</span>
<i style="left:352px;top:675px;width:1.4px;height:9.5px;background:#111"></i>
<span style="left:358px;top:671px;width:14px;text-align:center;font-weight:bold;font-size:11px;line-height:16px;color:#111">0</span>
<i style="left:375.5px;top:675px;width:1.4px;height:9.5px;background:#111"></i>
<span style="left:382px;top:671px;font-weight:bold;font-size:11px;letter-spacing:0.8px;line-height:16px;color:#111">000</span>
<i style="left:302.5px;top:690px;width:13px;height:16px;background:#f2474e"></i>
<i style="left:315.4px;top:690px;width:13px;height:16px;background:#f8b15a"></i>
<i style="left:328.2px;top:690px;width:13px;height:16px;background:#c5f560"></i>
<i style="left:341.1px;top:690px;width:13px;height:16px;background:#3ef35d"></i>
<i style="left:354.0px;top:690px;width:13px;height:16px;background:#4ef0c1"></i>
<i style="left:366.9px;top:690px;width:13px;height:16px;background:#46c5f6"></i>
<i style="left:379.7px;top:690px;width:13px;height:16px;background:#4f50f2"></i>
<i style="left:392.6px;top:690px;width:13px;height:16px;background:#b651f2"></i>
<i style="left:405.5px;top:690px;width:13px;height:16px;background:#f24fca"></i>
<i style="left:354px;top:690px;width:13px;height:16px;border:2px solid #000"></i>
<div class="btn g" style="left:248px;top:709px;width:171px;height:15px;line-height:15px;font-size:10px">Show/Hide MIDI Editor</div>
<div class="row" style="left:424px;top:592px;width:174px;height:19px"></div>
<span class="lbl" style="left:427px;top:592px;line-height:19px;text-align:left;font-size:10px;letter-spacing:-0.3px">Channel</span>
<div class="val" style="left:469px;top:593px;width:84px;height:17px;line-height:17px;padding-left:4px;font-size:13px;font-family:Liberation Mono">1</div>
<div style="left:557px;top:594px;width:17px;height:15px;border-radius:2px;background:linear-gradient(#e6e6e6,#c8c8c8);font-size:9px;text-align:center;line-height:14px;color:#333">-</div>
<div style="left:575px;top:594px;width:18px;height:15px;border-radius:2px;background:linear-gradient(#e6e6e6,#c8c8c8);font-size:9px;text-align:center;line-height:14px;color:#333">+</div>
<div class="row" style="left:424px;top:612px;width:152px;height:18px"></div>
<span class="lbl" style="left:427px;top:612px;line-height:18px;text-align:left;font-size:10px">Velocity</span>
<div style="left:469px;top:613px;width:104px;height:16px;background:#3f86bd;font-family:Liberation Mono;font-size:12px;line-height:16px;color:#111;-webkit-text-stroke:0.2px #111;padding-left:3px">100.0%</div>
<div style="left:581px;top:613px;width:15px;height:16px;background:#f39c36;border-radius:2px"></div>
<svg style="position:absolute;left:581px;top:613px" width="16" height="16"><path d="M5 6 H7 L10 3.5 V12.5 L7 10 H5 Z" fill="#111"/></svg>
<div class="btn g" style="left:426px;top:632px;width:171px;height:16px;line-height:16px;font-size:10px;padding-right:3px">Insert Program Change<i class=arr style="top:5px;right:5.5px;border-left-width:4.5px;border-top-width:2.5px;border-bottom-width:2.5px"></i></div>
<div class="btn g" style="left:426px;top:652px;width:171px;height:15px;line-height:15px;font-size:10px">Disable Looping</div>
<div class="btn o" style="left:426px;top:671px;width:171px;height:15px;line-height:15px;text-align:left;padding-left:17px;font-size:9.8px">Remap on Tempo Change</div>
<i style="left:429px;top:674px;width:9px;height:9px;border-radius:50%;border:1.3px solid #2a2418"></i><i style="left:431.5px;top:676.5px;width:4px;height:4px;border-radius:50%;background:#2a2418"></i>
<div class="btn b" style="left:426px;top:690px;width:171px;height:15px;line-height:15px;text-align:left;padding-left:17px;background:#2f86c6;font-size:10px">Show Note Automation</div>
<i style="left:429px;top:693px;width:9px;height:9px;border-radius:50%;border:1.3px solid #e8f0f8"></i>
<div class="btn r" style="left:426px;top:709px;width:171px;height:15px;line-height:15px;font-size:10px;padding-right:3px">Delete MIDI Content<i class=arr style="top:5px;right:5.5px;border-left-width:4.5px;border-top-width:2.5px;border-bottom-width:2.5px"></i></div>
<div class="row" style="left:602px;top:592px;width:174px;height:19px"></div>
<span class="lbl" style="left:600px;top:592px;width:51px;line-height:19px">Quantise</span>
<div class="row" style="left:602px;top:612px;width:174px;height:18px"></div>
<span class="lbl" style="left:600px;top:612px;width:51px;line-height:18px">Amount</span>
<div class="row" style="left:602px;top:631px;width:174px;height:18px"></div>
<span class="lbl" style="left:600px;top:631px;width:51px;line-height:18px">Groove</span>
<div class="row" style="left:602px;top:650px;width:174px;height:18px"></div>
<span class="lbl" style="left:600px;top:653px;width:51px;line-height:6.5px;font-size:5.5px">Multi<br>Channel</span>
<div class="val" style="left:658px;top:593px;width:115px;height:16px;line-height:16px;text-align:center;font-size:9px;-webkit-text-stroke:0">(none)</div>
<div style="left:658px;top:613px;width:115px;height:16px;background:#3f86bd;font-family:Liberation Mono;font-size:12px;line-height:16px;color:#111;-webkit-text-stroke:0.2px #111;padding-left:4px">100 %</div>
<div class="val" style="left:658px;top:632px;width:115px;height:16px;line-height:16px;text-align:center;font-size:9px;-webkit-text-stroke:0">(none)</div>
<div class="val" style="left:658px;top:651px;width:115px;height:16px;line-height:16px;padding-left:4px;font-size:10px;background:#fff">Single channel mode</div>
<svg style="position:absolute;left:762px;top:653px" width="8" height="12"><path d="M1 5 L4 1.5 L7 5 Z M1 7 L4 10.5 L7 7 Z" fill="#333"/></svg>
<div class="btn b" style="left:603px;top:728px;width:172px;height:15px;line-height:15px;background:#2f86c6;font-size:10px;padding-right:3px">Render Clip<i class=arr style="top:5px;right:5.5px;border-left-width:4.5px;border-top-width:2.5px;border-bottom-width:2.5px"></i></div>
<div class="btn g" style="left:781px;top:593.8px;width:171px;height:15.5px;line-height:15.5px;font-size:10px;padding-right:3px">Select Clips<i class=arr style="top:5px;right:5.5px;border-left-width:4.5px;border-top-width:2.5px;border-bottom-width:2.5px"></i></div>
<div class="btn g" style="left:781px;top:613.2px;width:171px;height:15.5px;line-height:15.5px;font-size:10px;padding-right:3px">Auto-Tempo<i class=arr style="top:5px;right:5.5px;border-left-width:4.5px;border-top-width:2.5px;border-bottom-width:2.5px"></i></div>
<div class="btn g" style="left:781px;top:632.3px;width:171px;height:15.5px;line-height:15.5px;font-size:10px;padding-right:3px">Split Clips<i class=arr style="top:5px;right:5.5px;border-left-width:4.5px;border-top-width:2.5px;border-bottom-width:2.5px"></i></div>
<div class="btn g" style="left:781px;top:651.4px;width:171px;height:15.5px;line-height:15.5px;font-size:10px;padding-right:0px">Copy Marked Section</div>
<div class="btn g" style="left:781px;top:670.8px;width:171px;height:15.5px;line-height:15.5px;font-size:10px;padding-right:3px">Move Clip<i class=arr style="top:5px;right:5.5px;border-left-width:4.5px;border-top-width:2.5px;border-bottom-width:2.5px"></i></div>
<div class="btn r" style="left:781px;top:728px;width:171px;height:15px;line-height:15px;font-size:10px;padding-right:3px">Delete<i class=arr style="top:5px;right:5.5px;border-left-width:4.5px;border-top-width:2.5px;border-bottom-width:2.5px"></i></div>
<span style="left:966px;top:576px;font-size:11px;color:#222;line-height:12px">135.00 bpm</span>
<span style="left:1034px;top:576px;font-size:11px;color:#222;line-height:12px">4/4</span>
<span style="left:1065px;top:576px;font-size:11px;color:#222;line-height:12px">C</span>
<span style="left:1106.5px;top:574.5px;font-size:16px;color:#111;line-height:18px;font-weight:bold;letter-spacing:0.9px">57</span>
<i style="left:1129.3px;top:576.5px;width:2px;height:14px;background:#111"></i>
<span style="left:1140px;top:574.5px;font-size:16px;color:#111;line-height:18px;font-weight:bold">1</span>
<i style="left:1157.8px;top:576.5px;width:2px;height:14px;background:#111"></i>
<span style="left:1164px;top:574.5px;font-size:16px;color:#111;line-height:18px;font-weight:bold;letter-spacing:0.9px">571</span>
<div style="left:963.5px;top:597px;width:37px;height:17.5px;background:#0f7a2a;border-radius:3px"></div>
<div class="tb" style="left:1002.5px;top:597px;width:37px;height:17.5px"></div>
<div class="tb" style="left:1041.5px;top:597px;width:76px;height:17.5px"></div>
<div class="tb" style="left:1120.3px;top:597px;width:76.5px;height:17.5px"></div>
<div class="tb" style="left:963.5px;top:617.3px;width:37px;height:18px"></div>
<div class="tb" style="left:1002.5px;top:617.3px;width:37px;height:18px"></div>
<div class="tb" style="left:1041.5px;top:617.3px;width:76px;height:18px"></div>
<div class="tb" style="left:1120.3px;top:617.3px;width:76.5px;height:18px"></div>
<svg style="position:absolute;left:958px;top:592px" width="242" height="46"><rect x="16" y="9.6" width="8.5" height="8.4" fill="#c2dcc6"/><path d="M20.2 11 L22.8 16.5 H17.6 Z" fill="none" stroke="#0f7a2a" stroke-width="0.8"/><path d="M27 10.6 L31.5 13.8 L27 17 Z" fill="#c2dcc6"/><rect x="55" y="10" width="7.8" height="7.7" fill="#f07283"/><path d="M58.9 11.4 L61.2 16.3 H56.6 Z" fill="none" stroke="#fcc" stroke-width="0.8"/><circle cx="68.7" cy="13.8" r="3" fill="#f07283"/><path d="M117.8 9.7 L126.2 13.7 L117.8 17.7 Z" fill="#1ba83a"/><circle cx="200" cy="13.8" r="4" fill="#8a0808"/><path d="M24 29.8 L29.2 38.8 H18.8 Z" fill="#f29a2e" stroke="#f29a2e" stroke-width="1" stroke-linejoin="round"/><rect x="23.5" y="32.5" width="1.1" height="3.6" fill="#fde3c0"/><rect x="54" y="30.5" width="1.5" height="8" fill="#444"/><path d="M55.5 34.5 L63.8 30.5 V38.5 Z M63.5 34.5 L72 30.5 V38.5 Z" fill="#444"/><path d="M114 34.5 L122.2 30.5 V38.5 Z M122 34.5 L130.3 30.5 V38.5 Z" fill="#444"/><path d="M192 30.5 L200.2 34.5 L192 38.5 Z M200 30.5 L208.3 34.5 L200 38.5 Z" fill="#444"/></svg>
<div style="left:962px;top:639px;width:211px;height:31px;background:#dedede"></div>
<svg style="position:absolute;left:966px;top:641px" width="202" height="28"><path d="M1 0.5 H196 L200 13.5 L196 26.5 H1 L5 13.5 Z" fill="#79aaa9"/></svg>
<span style="left:966px;top:647px;width:200px;text-align:center;font-size:9.5px;color:#222;line-height:12px">OneKnob Louder (s)</span>
<div style="left:1176px;top:639px;width:21px;height:108px;background:#333333"></div>
<div class="sb" style="left:964px;top:675px;width:67px;height:15px;font-size:9px;">Loop</div>
<div class="sb" style="left:1034px;top:675px;width:68px;height:15px;font-size:9px">Click</div>
<div class="sb" style="left:964px;top:694px;width:67px;height:15px;font-size:9px;">Auto Lock</div>
<div class="sb" style="left:1034px;top:694px;width:68px;height:15px;font-size:9px">Punch</div>
<div class="sb" style="left:964px;top:712px;width:67px;height:15px;font-size:9px;background:#f39c36;border-color:#e59030">Snap</div>
<div class="sb" style="left:1034px;top:712px;width:68px;height:15px;font-size:9px">Scroll</div>
<div class="sb" style="left:964px;top:730px;width:67px;height:15px;font-size:9px;">MIDI Learn</div>
<div class="sb" style="left:1034px;top:730px;width:68px;height:15px;font-size:9px">MTC</div>
<svg style="position:absolute;left:1106px;top:672px" width="68" height="16"><path d="M2 8 L32 3 L62 8 L32 13 Z" fill="#b5b5b5"/><path d="M32 2 L33.5 8 L32 14 L30.5 8 Z" fill="#555"/></svg>
<div style="left:1106px;top:688px;width:66px;height:59px;background:#ececec;border:1px solid #e0e0e0"></div>
<div style="left:1107px;top:696px;width:64px;height:51px;background:#bdbdbd"></div>
<div style="left:1107px;top:696px;width:64px;height:1.5px;background:#333"></div>
</body></html>
